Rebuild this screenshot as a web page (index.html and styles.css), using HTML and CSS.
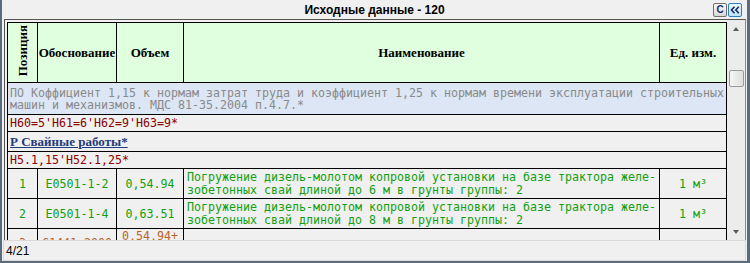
FILE: index.html
```html
<!DOCTYPE html>
<html lang="ru">
<head>
<meta charset="utf-8">
<title>Исходные данные - 120</title>
<link rel="stylesheet" href="styles.css">
</head>
<body>
<div class="window">
  <div class="titlebar">
    <span class="spacer"></span>
    <div class="title">Исходные данные - 120</div>
    <div class="tools">
      <span class="tool">C</span>
      <span class="tool active"><svg width="10" height="8" viewBox="0 0 10 8"><polyline points="4.5,0.8 1.5,4 4.5,7.2" fill="none" stroke="#1b2a66" stroke-width="1.6"/><polyline points="8.8,0.8 5.8,4 8.8,7.2" fill="none" stroke="#1b2a66" stroke-width="1.6"/></svg></span>
    </div>
  </div>
  <div class="frame">
    <div class="viewport">
      <table class="grid">
        <colgroup>
          <col class="c-pos"><col class="c-code"><col class="c-vol"><col class="c-name"><col class="c-unit">
        </colgroup>
        <thead>
          <tr class="head">
            <th><span class="vert">Позиция</span></th>
            <th>Обоснование</th>
            <th>Объем</th>
            <th>Наименование</th>
            <th>Ед. изм.</th>
          </tr>
        </thead>
        <tbody>
          <tr class="note"><td colspan="5">ПО Коффициент 1,15 к нормам затрат труда и коэффициент 1,25 к нормам времени эксплуатации строительных<br>машин и механизмов. МДС 81-35.2004 п.4.7.*</td></tr>
          <tr class="formula"><td colspan="5">Н60=5'Н61=6'Н62=9'Н63=9*</td></tr>
          <tr class="section"><td colspan="5"><a href="#">Р Свайные работы*</a></td></tr>
          <tr class="formula"><td colspan="5">Н5.1,15'Н52.1,25*</td></tr>
          <tr class="item">
            <td class="ctr">1</td>
            <td class="ctr">E0501-1-2</td>
            <td class="ctr">0,54.94</td>
            <td class="name">Погружение дизель-молотом копровой установки на базе трактора желе-<br>зобетонных свай длиной до 6 м в грунты группы: 2</td>
            <td class="ctr">1 м³</td>
          </tr>
          <tr class="item">
            <td class="ctr">2</td>
            <td class="ctr">E0501-1-4</td>
            <td class="ctr">0,63.51</td>
            <td class="name">Погружение дизель-молотом копровой установки на базе трактора желе-<br>зобетонных свай длиной до 8 м в грунты группы: 2</td>
            <td class="ctr">1 м³</td>
          </tr>
          <tr class="item alt">
            <td class="ctr">3</td>
            <td class="ctr">С1441-2000</td>
            <td class="ctr top">0,54,94+<br>0,63,51</td>
            <td class="name"></td>
            <td class="ctr"></td>
          </tr>
        </tbody>
      </table>
    </div>
    <div class="scrollbar">
      <div class="sb-btn"><span class="arrow up"></span></div>
      <div class="sb-track"><div class="sb-thumb"></div></div>
      <div class="sb-btn"><span class="arrow down"></span></div>
    </div>
  </div>
  <div class="status">4/21</div>
</div>
</body>
</html>
```

FILE: styles.css
```css
html, body {
  margin: 0;
  padding: 0;
  background: #f0f0f0;
}

.window {
  width: 750px;
  height: 263px;
  box-sizing: border-box;
  border-left: 2px solid #5a6b7d;
  border-right: 3px solid #5a6b7d;
  border-bottom: 2px solid #5a6b7d;
  background: #f0f0f0;
  display: flex;
  flex-direction: column;
  font-family: "Liberation Sans", Arial, sans-serif;
  overflow: hidden;
}

/* title bar */
.titlebar {
  height: 19px;
  flex: none;
  display: grid;
  grid-template-columns: 1fr auto 1fr;
  align-items: center;
}
.title {
  font-weight: bold;
  font-size: 12px;
  color: #000;
  padding-top: 1px;
}
.tools {
  justify-self: end;
  display: flex;
  gap: 1px;
  margin-right: 5px;
  padding-top: 1px;
}
.tool {
  width: 12px;
  height: 12px;
  border: 1px solid #6f6f6f;
  border-radius: 2px;
  background: linear-gradient(#fbfbfb, #d8d8d8);
  display: flex;
  align-items: center;
  justify-content: center;
  font-weight: bold;
  font-size: 10px;
  color: #1b2a66;
  line-height: 1;
}
.tool.active {
  border-color: #2f7fc0;
  background: linear-gradient(#eaf7fe, #bfe4f8);
}

/* content frame */
.frame {
  flex: none;
  height: 221px;
  box-sizing: border-box;
  margin: 0 1px 0 2px;
  border-top: 1px solid #555;
  border-left: 1px solid #555;
  border-right: 1px solid #8a8a8a;
  display: flex;
}
.viewport {
  flex: 1;
  padding: 2px 0 0 2px;
  overflow: hidden;
}

/* table */
.grid {
  border-collapse: separate;
  border-spacing: 0;
  table-layout: fixed;
  width: 720px;
  border-top: 1px solid #000;
  border-left: 1px solid #000;
}
.c-pos { width: 30px; }
.c-code { width: 79px; }
.c-vol { width: 67px; }
.c-name { width: 476px; }
.c-unit { width: 67px; }

.grid th, .grid td {
  border-right: 1px solid #000;
  border-bottom: 1px solid #000;
  padding: 0;
}

.head th {
  height: 59px;
  background: #dfffdf;
  font-family: "Liberation Serif", "Times New Roman", serif;
  font-weight: bold;
  font-size: 13px;
  color: #000;
  text-align: center;
  vertical-align: middle;
}
.vert {
  display: inline-block;
  writing-mode: vertical-rl;
  transform: rotate(180deg);
  line-height: 14px;
}

.grid td {
  font-family: "DejaVu Sans Mono", "Liberation Mono", monospace;
  font-size: 11.63px;
  white-space: nowrap;
  background: #f0f0f0;
}

.note td {
  background: #dce6f5;
  color: #8a8a8a;
  line-height: 12px;
  padding: 4px 1px 3px 2px;
}
.formula td {
  color: #8b0000;
  line-height: 12px;
  padding: 2px 2px 2px 2px;
}
.section td {
  line-height: 15px;
  padding: 2px 2px 2px 2px;
  font-family: "Liberation Serif", "Times New Roman", serif;
  font-size: 13px;
  font-weight: bold;
}
.section a {
  color: #1f3c7a;
  text-decoration: underline;
}

.item td {
  color: #11a011;
  line-height: 13px;
  padding: 2px 0 1px 0;
  vertical-align: middle;
}
.item .ctr { text-align: center; }
.item .name { padding-left: 3px; text-align: left; }
.item.alt td { color: #b8642a; }
.item .top { vertical-align: top; padding-top: 1px; }

/* scrollbar */
.scrollbar {
  width: 18px;
  flex: none;
  background: #ececec;
  display: flex;
  flex-direction: column;
}
.sb-btn {
  height: 17px;
  flex: none;
  display: flex;
  align-items: center;
  justify-content: center;
}
.sb-track {
  flex: 1;
  padding: 33px 1px 0 2px;
}
.sb-thumb {
  height: 15px;
  border: 1px solid #9a9a9a;
  border-radius: 2px;
  background: linear-gradient(90deg, #f6f6f6, #dedede);
}
.arrow {
  width: 0;
  height: 0;
  border-left: 3.5px solid transparent;
  border-right: 3.5px solid transparent;
}
.arrow.up { border-bottom: 4px solid #5a5a5a; }
.arrow.down { border-top: 4px solid #5a5a5a; }

/* status */
.status {
  flex: none;
  height: 21px;
  box-sizing: border-box;
  margin: 0 1px;
  border: 1px solid #dadada;
  padding: 0 2px;
  display: flex;
  align-items: center;
  font-size: 12px;
  color: #000;
}
```
